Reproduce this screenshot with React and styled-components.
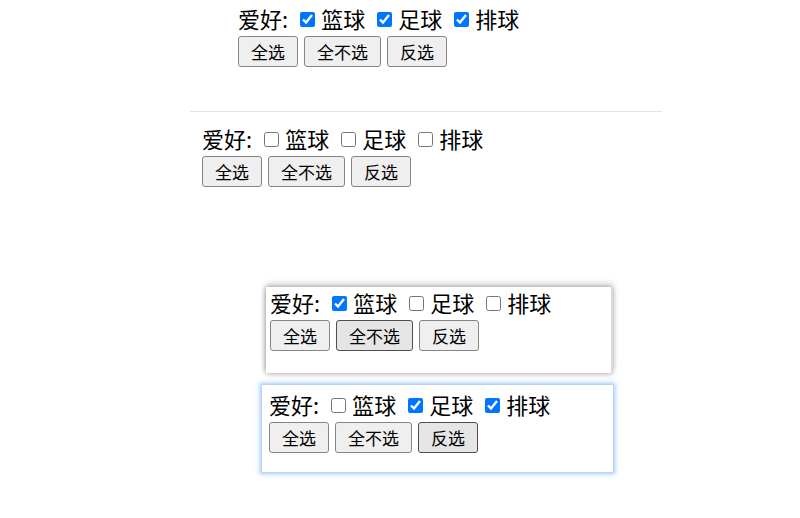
import React from "react";
import styled, { createGlobalStyle, css } from "styled-components";

const Global = createGlobalStyle`
  html, body { margin: 0; padding: 0; background: #fff; }
  body { font-family: "Noto Sans CJK SC", "Noto Sans", sans-serif; color: #000; }
`;

const Page = styled.div`
  width: 800px;
  height: 518px;
  overflow: hidden;
  display: flex;
  flex-direction: column;
  align-items: flex-start;
`;

const Plain = styled.div`
  margin-left: ${(p) => p.$left}px;
  margin-top: ${(p) => p.$top}px;
`;

const Divider = styled.div`
  margin-left: 190px;
  margin-top: 44px;
  width: 472px;
  height: 1px;
  background: #e2e2e2;
`;

const Card = styled.div`
  box-sizing: border-box;
  margin-left: ${(p) => p.$left}px;
  margin-top: ${(p) => p.$top}px;
  width: ${(p) => p.$width}px;
  height: ${(p) => p.$height}px;
  padding: ${(p) => p.$padTop}px 0 0 ${(p) => p.$padLeft}px;
  background: #fff;
  ${(p) =>
    p.$glow
      ? css`
          box-shadow: 0 0 3px 2px rgba(140, 185, 245, 0.6), 0 0 7px 2px rgba(170, 205, 250, 0.45);
        `
      : css`
          border-right: 2px solid #d8d8d8;
          box-shadow: 0 -3px 6px rgba(0, 0, 0, 0.22), 0 2px 5px rgba(0, 0, 0, 0.16),
            -2px 0 4px rgba(0, 0, 0, 0.12);
        `}
`;

const Row = styled.div`
  display: flex;
  align-items: center;
  height: 26px;
  font-size: 22px;
  line-height: 26px;
  white-space: nowrap;
`;

const Title = styled.span``;

const Check = styled.input.attrs({ type: "checkbox" })`
  width: 15px;
  height: 15px;
  margin: 2px 0 0 12px;
  accent-color: #0075ff;
`;

const Label = styled.span`
  margin-left: 6px;
`;

const Buttons = styled.div`
  display: flex;
  gap: 6px;
  margin-top: 5px;
`;

const Btn = styled.button`
  box-sizing: border-box;
  height: 31px;
  padding: 0 12px;
  font-family: "Noto Sans CJK SC", "Noto Sans", sans-serif;
  font-size: 17px;
  color: #000;
  background: ${(p) => (p.$pressed ? "#e5e5e5" : "#efefef")};
  border: 1px solid ${(p) => (p.$pressed ? "#4f4f4f" : "#858585")};
  border-radius: 3px;
`;

const sports = ["篮球", "足球", "排球"];

function Hobby({ checked, pressed }) {
  return (
    <>
      <Row>
        <Title>爱好:</Title>
        {sports.map((s, i) => (
          <React.Fragment key={s}>
            <Check checked={checked[i]} onChange={() => {}} />
            <Label>{s}</Label>
          </React.Fragment>
        ))}
      </Row>
      <Buttons>
        {["全选", "全不选", "反选"].map((b, i) => (
          <Btn key={b} $pressed={pressed === i}>
            {b}
          </Btn>
        ))}
      </Buttons>
    </>
  );
}

export default function App() {
  return (
    <>
      <Global />
      <Page>
        <Plain $left={238} $top={5}>
          <Hobby checked={[true, true, true]} />
        </Plain>
        <Divider />
        <Plain $left={202} $top={13}>
          <Hobby checked={[false, false, false]} />
        </Plain>
        <Card $left={266} $top={100} $width={347} $height={86} $padTop={2} $padLeft={4}>
          <Hobby checked={[true, false, false]} pressed={1} />
        </Card>
        <Card $glow $left={262} $top={12} $width={351} $height={87} $padTop={6} $padLeft={7}>
          <Hobby checked={[false, true, true]} pressed={2} />
        </Card>
      </Page>
    </>
  );
}
